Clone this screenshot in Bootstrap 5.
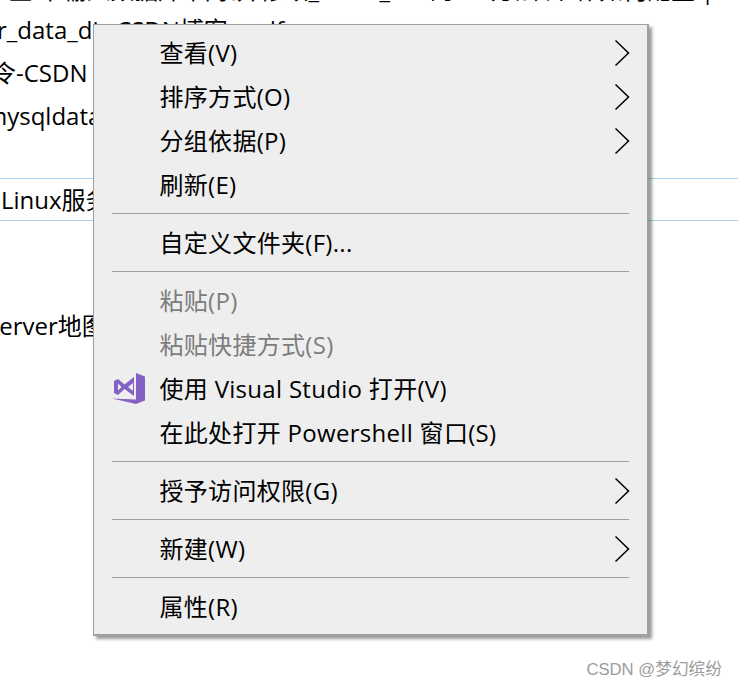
<!DOCTYPE html>
<html lang="zh">
<head>
<meta charset="utf-8">
<title>Context menu</title>
<link href="https://cdn.jsdelivr.net/npm/bootstrap@5.3.0/dist/css/bootstrap.min.css" rel="stylesheet">
<style>
html,body{margin:0;background:#fff;overflow:hidden}
body{width:738px;height:687px;position:relative;font-family:"Liberation Sans","Noto Sans CJK SC",sans-serif}
.bg-page{height:687px;overflow:hidden;font-size:24px;color:#000;font-family:"Open Sans","Noto Sans CJK SC",sans-serif}
.bg-line{white-space:nowrap;line-height:30px;height:30px}
.bg-top{margin-top:-25px;margin-left:8px;margin-bottom:10px}
.bg-a{margin-left:-3px;margin-bottom:13px}
.bg-b{margin-left:-8px;margin-bottom:13px}
.bg-c{margin-left:-15px;margin-bottom:47px}
.bg-band{border-top:1px solid #a6d4f2;border-bottom:1px solid #a6d4f2;height:43px;margin-bottom:90px;line-height:42px;padding-left:1px;white-space:nowrap}
.bg-d{margin-left:-14px}
.ctx-menu{position:absolute;left:93px;top:24px;width:556px;height:612px;background:#eee;border:1px solid #a0a0a0;border-right-width:2px;border-bottom-width:2px;box-shadow:3px 3px 3px rgba(0,0,0,.4);padding:6px 18px 5px 18px;font-family:"Open Sans","Noto Sans CJK SC",sans-serif;font-size:24px;letter-spacing:.3px;color:#000}
.ctx-item{height:44px;padding-left:47.5px;position:relative;white-space:nowrap}
.ctx-off{color:#7d7d7d}
.ctx-sep{height:1px;background:#a0a0a0;margin:6px 0 7px}
.ctx-arrow{position:absolute;left:502px;top:8px;width:16px;height:28px}
.ctx-vs{position:absolute;left:0;top:5px;width:33px;height:33px}
.ctx-mark{position:absolute;right:16px;bottom:8px;color:#9c9c9c;font-size:16.7px;line-height:18px;font-family:"Liberation Sans","Noto Sans CJK SC",sans-serif}
</style>
</head>
<body>
<div class="bg-page">
  <div class="bg-line bg-top">区 中输入数据库 目录并修改_ 　　 _5.7 的 　 方法 介绍 如何配置 |</div>
  <div class="bg-line bg-a">r_data_dir-CSDN博客...pdf</div>
  <div class="bg-line bg-b">令-CSDN 博客</div>
  <div class="bg-line bg-c">mysqldata</div>
  <div class="bg-band">Linux服务器</div>
  <div class="bg-line bg-d">Server地图</div>
</div>
<div class="ctx-menu d-flex flex-column">
  <div class="ctx-item flex-shrink-0 d-flex align-items-center">查看(V)<svg class="ctx-arrow" viewBox="0 0 16 28"><path d="M1.5 1.5 14.5 14 1.5 26.500" fill="none" stroke="#000" stroke-width="1.500"/></svg></div>
  <div class="ctx-item flex-shrink-0 d-flex align-items-center">排序方式(O)<svg class="ctx-arrow" viewBox="0 0 16 28"><path d="M1.5 1.5 14.5 14 1.5 26.500" fill="none" stroke="#000" stroke-width="1.500"/></svg></div>
  <div class="ctx-item flex-shrink-0 d-flex align-items-center">分组依据(P)<svg class="ctx-arrow" viewBox="0 0 16 28"><path d="M1.5 1.5 14.5 14 1.5 26.500" fill="none" stroke="#000" stroke-width="1.500"/></svg></div>
  <div class="ctx-item flex-shrink-0 d-flex align-items-center">刷新(E)</div>
  <div class="ctx-sep flex-shrink-0"></div>
  <div class="ctx-item flex-shrink-0 d-flex align-items-center">自定义文件夹(F)...</div>
  <div class="ctx-sep flex-shrink-0"></div>
  <div class="ctx-item ctx-off flex-shrink-0 d-flex align-items-center">粘贴(P)</div>
  <div class="ctx-item ctx-off flex-shrink-0 d-flex align-items-center">粘贴快捷方式(S)</div>
  <div class="ctx-item flex-shrink-0 d-flex align-items-center"><svg class="ctx-vs" viewBox="0 0 33 33"><path fill="#8661c5" d="M24 1 33 4.500V28.500L24 32 0 26.500 24 27.500Z"/><path fill="#8661c5" fill-rule="evenodd" d="M2 9 6 7 12.500 12.500 22 5V24L12.500 17 6 23 2 21ZM6 11.500V18.500L9.500 15ZM16 15 21 19V11Z"/></svg>使用 Visual Studio 打开(V)</div>
  <div class="ctx-item flex-shrink-0 d-flex align-items-center">在此处打开 Powershell 窗口(S)</div>
  <div class="ctx-sep flex-shrink-0"></div>
  <div class="ctx-item flex-shrink-0 d-flex align-items-center">授予访问权限(G)<svg class="ctx-arrow" viewBox="0 0 16 28"><path d="M1.5 1.5 14.5 14 1.5 26.500" fill="none" stroke="#000" stroke-width="1.500"/></svg></div>
  <div class="ctx-sep flex-shrink-0"></div>
  <div class="ctx-item flex-shrink-0 d-flex align-items-center">新建(W)<svg class="ctx-arrow" viewBox="0 0 16 28"><path d="M1.5 1.5 14.5 14 1.5 26.500" fill="none" stroke="#000" stroke-width="1.500"/></svg></div>
  <div class="ctx-sep flex-shrink-0"></div>
  <div class="ctx-item flex-shrink-0 d-flex align-items-center">属性(R)</div>
</div>
<div class="ctx-mark">CSDN @梦幻缤纷</div>
<script src="https://cdn.jsdelivr.net/npm/bootstrap@5.3.0/dist/js/bootstrap.bundle.min.js"></script>
</body>
</html>
